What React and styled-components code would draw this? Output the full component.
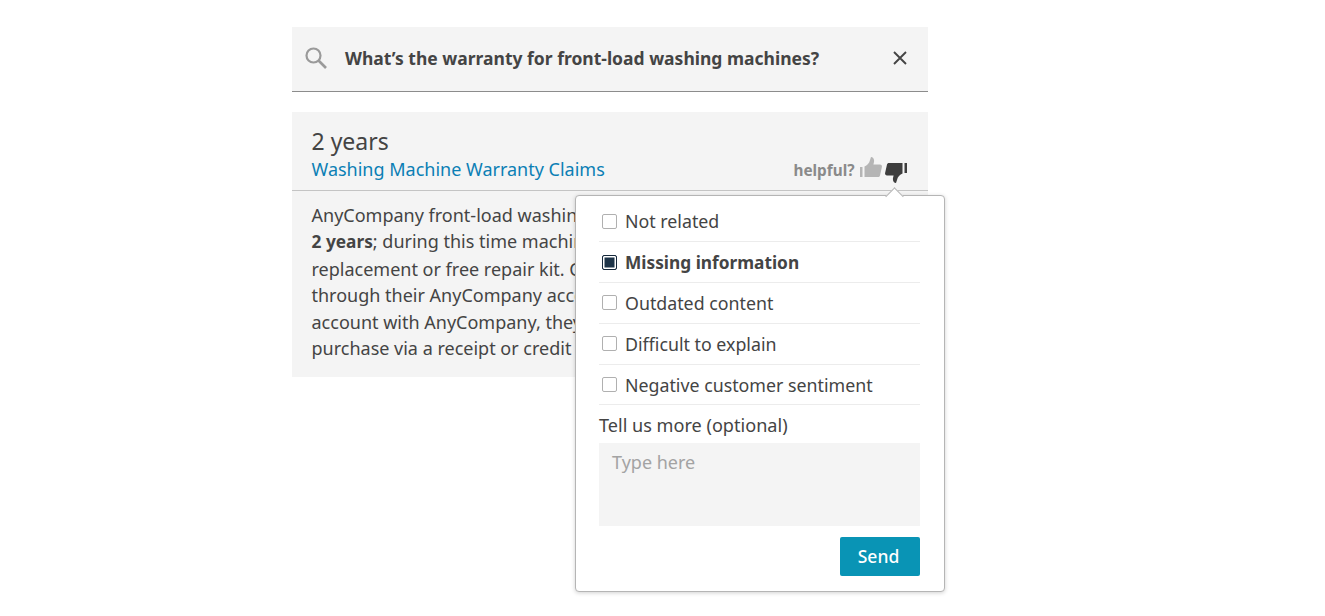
import { useState } from "react";
import styled, { createGlobalStyle } from "styled-components";

const reasons = [
	{ label: "Not related" },
	{ label: "Missing information", checked: true },
	{ label: "Outdated content" },
	{ label: "Difficult to explain" },
	{ label: "Negative customer sentiment" },
];

const GlobalStyle = createGlobalStyle`
	* {
		box-sizing: border-box;
	}
	body {
		margin: 0;
		background: #fff;
		color: #444;
		font-family: "Noto Sans", "Open Sans", sans-serif;
	}
`;

const Page = styled.div`
	width: 636px;
	margin-left: 291.5px;
	padding-top: 27px;
	height: 616px;
	display: flex;
	flex-direction: column;
	gap: 20px;
`;

const SearchBar = styled.div`
	height: 64.5px;
	margin-bottom: 0.5px;
	background: #f4f4f4;
	border-bottom: 1px solid #8c8c8c;
	display: flex;
	align-items: center;
	padding: 0 20px 1px 12px;
`;

const Query = styled.div`
	flex: 1;
	margin-left: 17.5px;
	font-size: 17.5px;
	font-weight: 700;
	color: #444;
	white-space: nowrap;
`;

const Card = styled.div`
	position: relative;
`;

const CardHead = styled.div`
	height: 79px;
	background: #f4f4f4;
	border-bottom: 1px solid #c4c4c4;
	padding: 0 21px 0 20px;
	display: flex;
	justify-content: space-between;
	align-items: flex-end;
`;

const Title = styled.div`
	font-size: 23px;
	line-height: 26px;
	margin-bottom: 2px;
	color: #444;
`;

const SourceLink = styled.a`
	display: block;
	font-size: 18px;
	line-height: 26px;
	color: #0b7fb5;
	text-decoration: none;
	margin-bottom: 8px;
`;

const Helpful = styled.div`
	display: flex;
	align-items: center;
	height: 20px;
	margin-bottom: 10px;
	font-size: 15.3px;
	font-weight: 700;
	color: #8a8a8a;
`;

const ThumbIcon = styled.svg`
	width: 22px;
	height: 20px;
	margin-left: ${(props) => props.$gap}px;
	transform: translateY(${(props) => props.$shift}px);
	fill: ${(props) => props.color};
`;

const CardBody = styled.div`
	height: 186px;
	background: #f4f4f4;
	padding: 11px 20px 0;
	font-size: 18px;
	line-height: 26.4px;
	color: #444;
	white-space: nowrap;
	overflow: hidden;

	b {
		font-size: 17.3px;
	}
`;

const Popover = styled.div`
	position: absolute;
	left: 283px;
	top: 83px;
	width: 370px;
	height: 397px;
	background: #fff;
	border: 1px solid #b5b5b5;
	border-radius: 4px;
	box-shadow: 0 1px 4px rgba(0, 0, 0, 0.18);
	padding: 5.5px 24px 0 23.5px;

	&:before {
		content: "";
		position: absolute;
		top: -6.5px;
		left: 312px;
		width: 12px;
		height: 12px;
		background: #fff;
		border-top: 1px solid #b5b5b5;
		border-left: 1px solid #b5b5b5;
		transform: rotate(45deg);
	}
`;

const ReasonRow = styled.label`
	height: 40.8px;
	display: flex;
	align-items: center;
	gap: 8.5px;
	border-bottom: 1px solid #ececec;
	font-size: ${(props) => (props.$checked ? 17.3 : 17.8)}px;
	font-weight: ${(props) => (props.$checked ? 700 : 400)};
	color: #444;
	padding-left: 2.5px;
`;

const Box = styled.span`
	width: 15px;
	height: 15px;
	flex: none;
	border: 1px solid ${(props) => (props.$checked ? "#16293b" : "#b0b0b0")};
	border-radius: 2px;
	background: ${(props) => (props.$checked ? "#1d3448" : "#fff")};
	box-shadow: ${(props) => (props.$checked ? "inset 0 0 0 1.5px #fff" : "none")};
`;

const MoreLabel = styled.div`
	font-size: 18.1px;
	line-height: 24px;
	margin-top: 7.5px;
	color: #444;
`;

const TextBox = styled.textarea`
	display: block;
	width: 100%;
	height: 83px;
	margin-top: 6px;
	padding: 7px 13px;
	background: #f4f4f4;
	border: 0;
	outline: 0;
	resize: none;
	font-family: inherit;
	font-size: 18px;
	line-height: 24px;
	color: #444;

	&::placeholder {
		color: #a3a3a3;
		opacity: 1;
	}
`;

const Actions = styled.div`
	display: flex;
	justify-content: flex-end;
	margin-top: 11px;
`;

const SendButton = styled.button`
	width: 80px;
	height: 39px;
	border: 0;
	border-radius: 2px;
	background: #0994b5;
	color: #fff;
	font-family: inherit;
	font-size: 17.5px;
	font-weight: 500;
	padding: 0 2px 0 0;
`;

const SearchIcon = () => (
	<svg width="24" height="24" viewBox="0 0 24 24" fill="none" stroke="#9a9a9a" strokeWidth="2.2">
		<circle cx="9.500" cy="9.500" r="7" />
		<path d="M14.500 14.500 22 22" strokeWidth="2.600" />
	</svg>
);

const CloseIcon = () => (
	<svg width="16" height="16" viewBox="0 0 16 16" fill="none" stroke="#444" strokeWidth="1.900">
		<path d="M2 2 14 14M14 2 2 14" />
	</svg>
);

// 22x20 solid thumb, the down one is the same shape turned round
const thumbPath =
	"M0 10h2.500v10H0zM4.500 9.500C7 8.500 9.500 6 10 3L11 0c2 0 3.500 2 3 5l-.6 2.500H20c1.500 0 2.200 1.200 1.900 2.500L20 18.500c-.3 1-1 1.500-2 1.500H4.500z";

const App = () => {
	const [more, setMore] = useState("");

	return (
		<>
			<GlobalStyle />
			<Page>
				<SearchBar>
					<SearchIcon />
					<Query>What’s the warranty for front-load washing machines?</Query>
					<CloseIcon />
				</SearchBar>
				<Card>
					<CardHead>
						<div>
							<Title>2 years</Title>
							<SourceLink href="#">Washing Machine Warranty Claims</SourceLink>
						</div>
						<Helpful>
							helpful?
							<ThumbIcon $gap={5} $shift={-3} color="#b5b5b5" viewBox="0 0 22 20">
								<path d={thumbPath} />
							</ThumbIcon>
							<ThumbIcon $gap={3} $shift={3} color="#3d3d3d" viewBox="0 0 22 20">
								<path d={thumbPath} transform="rotate(180 11 10)" />
							</ThumbIcon>
						</Helpful>
					</CardHead>
					<CardBody>
						AnyCompany front-load washing machines have a warranty of
						<br />
						<b>2 years</b>; during this time machines are eligible for a
						<br />
						replacement or free repair kit. Customers can file a claim
						<br />
						through their AnyCompany account. If they do not have an
						<br />
						account with AnyCompany, they must provide proof of
						<br />
						purchase via a receipt or credit card statement.
					</CardBody>
					<Popover>
						{reasons.map((reason) => (
							<ReasonRow key={reason.label} $checked={reason.checked}>
								<Box $checked={reason.checked} />
								{reason.label}
							</ReasonRow>
						))}
						<MoreLabel>Tell us more (optional)</MoreLabel>
						<TextBox
							placeholder="Type here"
							value={more}
							onChange={(e) => setMore(e.target.value)}
						/>
						<Actions>
							<SendButton>Send</SendButton>
						</Actions>
					</Popover>
				</Card>
			</Page>
		</>
	);
};

export default App;
